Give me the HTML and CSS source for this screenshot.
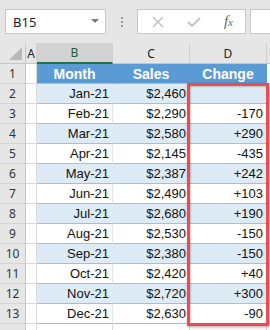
FILE: index.html
```html
<!DOCTYPE html>
<html lang="en">
<head>
  <meta charset="UTF-8" />
  <title>Change column</title>
  <link rel="stylesheet" href="styles.css">
</head>
<body>
  <div class="toolbar">
    <div class="namebox">
      <span>B15</span>
      <svg class="caret" width="8" height="5" viewBox="0 0 8 5"><path d="M0 0H8L4 4Z" fill="#7a7a7a"/></svg>
    </div>
    <div class="grip"><i></i><i></i><i></i></div>
    <div class="fxbox">
      <svg width="12" height="12" viewBox="0 0 12 12"><path d="M1 1L11 11M11 1L1 11" stroke="#c4c4c4" stroke-width="1.6" fill="none"/></svg>
      <svg width="14" height="10" viewBox="0 0 14 10"><path d="M1 5L5 9L13 1" stroke="#c4c4c4" stroke-width="2" fill="none"/></svg>
      <span class="fx">f<small>x</small></span>
    </div>
    <div class="formula"></div>
  </div>

  <div class="sheet">
    <div class="corner"><svg width="13" height="13" viewBox="0 0 13 13"><path d="M13 0V13H0Z" fill="#b9b9b9"/></svg></div>
    <div class="colhead">A</div>
    <div class="colhead sel">B</div>
    <div class="colhead">C</div>
    <div class="colhead">D</div>
    <div class="colhead"></div>

    <div class="rowhead">1</div><div class="cell"></div>
    <div class="cell th">Month</div><div class="cell th">Sales</div><div class="cell th">Change</div><div class="cell"></div>

    <div class="rowhead">2</div><div class="cell"></div>
    <div class="cell band num">Jan-21</div><div class="cell band num">$2,460</div><div class="cell band num"></div><div class="cell"></div>
    <div class="rowhead">3</div><div class="cell"></div>
    <div class="cell t num">Feb-21</div><div class="cell t num">$2,290</div><div class="cell t num">-170</div><div class="cell"></div>
    <div class="rowhead">4</div><div class="cell"></div>
    <div class="cell band num">Mar-21</div><div class="cell band num">$2,580</div><div class="cell band num">+290</div><div class="cell"></div>
    <div class="rowhead">5</div><div class="cell"></div>
    <div class="cell t num">Apr-21</div><div class="cell t num">$2,145</div><div class="cell t num">-435</div><div class="cell"></div>
    <div class="rowhead">6</div><div class="cell"></div>
    <div class="cell band num">May-21</div><div class="cell band num">$2,387</div><div class="cell band num">+242</div><div class="cell"></div>
    <div class="rowhead">7</div><div class="cell"></div>
    <div class="cell t num">Jun-21</div><div class="cell t num">$2,490</div><div class="cell t num">+103</div><div class="cell"></div>
    <div class="rowhead">8</div><div class="cell"></div>
    <div class="cell band num">Jul-21</div><div class="cell band num">$2,680</div><div class="cell band num">+190</div><div class="cell"></div>
    <div class="rowhead">9</div><div class="cell"></div>
    <div class="cell t num">Aug-21</div><div class="cell t num">$2,530</div><div class="cell t num">-150</div><div class="cell"></div>
    <div class="rowhead">10</div><div class="cell"></div>
    <div class="cell band num">Sep-21</div><div class="cell band num">$2,380</div><div class="cell band num">-150</div><div class="cell"></div>
    <div class="rowhead">11</div><div class="cell"></div>
    <div class="cell t num">Oct-21</div><div class="cell t num">$2,420</div><div class="cell t num">+40</div><div class="cell"></div>
    <div class="rowhead">12</div><div class="cell"></div>
    <div class="cell band num">Nov-21</div><div class="cell band num">$2,720</div><div class="cell band num">+300</div><div class="cell"></div>
    <div class="rowhead">13</div><div class="cell"></div>
    <div class="cell t num">Dec-21</div><div class="cell t num">$2,630</div><div class="cell t num">-90</div><div class="cell"></div>
    <div class="rowhead"></div><div class="cell"></div>
    <div class="cell"></div><div class="cell"></div><div class="cell"></div><div class="cell"></div>

    <div class="highlight"></div>
  </div>
</body>
</html>
```

FILE: styles.css
```css
* {
  box-sizing: border-box;
}
body {
  margin: 0;
  width: 270px;
  height: 330px;
  overflow: hidden;
  background: #fff;
  font-family: "Liberation Sans", Arial, sans-serif;
}
.toolbar {
  height: 43px;
  background: #e6e6e6;
  display: flex;
  align-items: flex-start;
  padding: 9px 0 0 5px;
}
.namebox {
  width: 101px;
  height: 25px;
  background: #fff;
  border: 1px solid #c6c6c6;
  display: flex;
  align-items: center;
  justify-content: space-between;
  padding: 0 6px 0 7px;
  font-family: "Noto Sans", sans-serif;
  font-size: 13px;
  color: #222;
}
.grip {
  width: 31px;
  height: 25px;
  display: flex;
  flex-direction: column;
  align-items: center;
  justify-content: center;
  gap: 2px;
}
.grip i {
  display: block;
  width: 2px;
  height: 2px;
  background: #9a9a9a;
}
.fxbox {
  width: 109px;
  height: 25px;
  background: #fff;
  border: 1px solid #c6c6c6;
  display: flex;
  align-items: center;
  justify-content: space-between;
  padding: 0 12px 0 14px;
}
.fx {
  font-family: "Liberation Serif", serif;
  font-style: italic;
  font-size: 15px;
  color: #666;
}
.fx small {
  font-size: 11px;
}
.formula {
  margin-left: 4px;
  flex: 1;
  height: 25px;
  background: #fff;
  border: 1px solid #c6c6c6;
  border-right: none;
}
.sheet {
  position: relative;
  display: grid;
  grid-template-columns: 26px 11px 76px 77px 77px 1fr;
  grid-template-rows: 21px;
  grid-auto-rows: 20px;
  font-size: 13px;
  color: #111;
}
.corner {
  background: #e6e6e6;
  border-right: 1px solid #c6c6c6;
  border-bottom: 1px solid #c6c6c6;
  display: flex;
  align-items: flex-end;
  justify-content: flex-end;
  padding: 0 3px 3px 0;
}
.colhead {
  background: #e6e6e6;
  border-right: 1px solid #cfcfcf;
  border-bottom: 1px solid #c6c6c6;
  display: flex;
  align-items: center;
  justify-content: center;
  font-family: "Noto Sans", sans-serif;
  font-size: 12px;
  color: #222;
}
.colhead.sel {
  background: #d2d2d2;
  color: #1e5b3a;
  border-bottom: 2px solid #217346;
}
.rowhead {
  background: #e6e6e6;
  border-right: 1px solid #c6c6c6;
  border-bottom: 1px solid #d4d4d4;
  display: flex;
  align-items: center;
  justify-content: center;
  font-family: "Noto Sans", sans-serif;
  font-size: 12px;
  color: #333;
}
.cell {
  border-right: 1px solid #dadada;
  border-bottom: 1px solid #dadada;
  display: flex;
  align-items: center;
  padding: 0 3px;
  white-space: nowrap;
}
.th {
  background: #5b9bd5;
  border-right-color: #5b9bd5;
  border-bottom-color: #9bc2e6;
  color: #fff;
  font-weight: bold;
  font-size: 14px;
  justify-content: center;
}
.num {
  justify-content: flex-end;
}
.band {
  background: #ddebf7;
  border-right-color: #ddebf7;
  border-bottom-color: #9bc2e6;
}
.t {
  border-right-color: #dbe7f3;
  border-bottom-color: #9bc2e6;
}
.highlight {
  position: absolute;
  left: 187px;
  top: 40px;
  width: 82px;
  height: 243px;
  border: 3px solid #f04a4f;
  box-shadow: 1px 1px 3px rgba(0, 0, 0, 0.35), inset 1px 1px 2px rgba(0, 0, 0, 0.2);
}
```
